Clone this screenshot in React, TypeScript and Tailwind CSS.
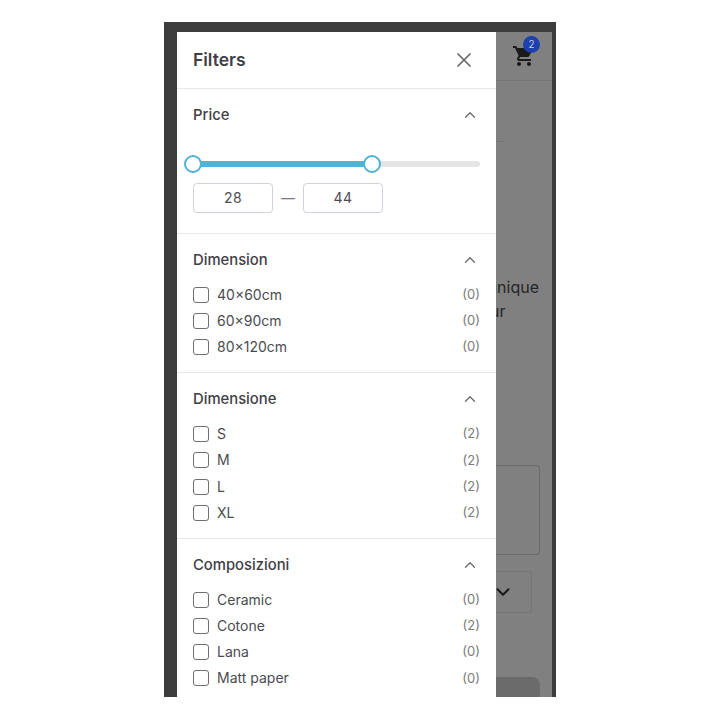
import { ChevronDown, ChevronUp, X } from 'lucide-react';

const SECTIONS = [
    {
        title: 'Dimension',
        items: [
            { label: '40×60cm', count: 0 },
            { label: '60×90cm', count: 0 },
            { label: '80×120cm', count: 0 },
        ],
    },
    {
        title: 'Dimensione',
        items: [
            { label: 'S', count: 2 },
            { label: 'M', count: 2 },
            { label: 'L', count: 2 },
            { label: 'XL', count: 2 },
        ],
    },
    {
        title: 'Composizioni',
        items: [
            { label: 'Ceramic', count: 0 },
            { label: 'Cotone', count: 2 },
            { label: 'Lana', count: 0 },
            { label: 'Matt paper', count: 0 },
        ],
    },
];

function CartIcon() {
    return (
        <svg width="24" height="24" viewBox="0 0 24 24" fill="#1a1a1a">
            <path d="M15.55 13c.75 0 1.41-.41 1.75-1.03l3.58-6.49A.996.996 0 0 0 20.01 4H5.21l-.94-2H1v2h2l3.6 7.59-1.35 2.44C4.52 15.37 5.48 17 7 17h12v-2H7l1.1-2h7.45zM7 18c-1.1 0-1.99.9-1.99 2S5.9 22 7 22s2-.9 2-2-.9-2-2-2zm10 0c-1.1 0-1.99.9-1.99 2s.89 2 1.99 2 2-.9 2-2-.9-2-2-2z" />
        </svg>
    );
}

function Section({ title, items }: { title: string; items: { label: string; count: number }[] }) {
    return (
        <section className="border-b border-[#e5e7eb] px-4 pt-[14px] pb-[12.15px]">
            <div className="flex h-6 items-center justify-between">
                <h3 className="text-[14.8px] font-medium text-[#3f4046]">{title}</h3>
                <ChevronUp size={18} strokeWidth={1.75} className="mr-[1px] text-[#6b6b6b]" />
            </div>
            <ul className="mt-[9.5px] flex flex-col">
                {items.map((item) => (
                    <li key={item.label} className="flex h-[26.25px] items-center">
                        <span className="h-4 w-4 rounded-[3px] border border-[#6f6f6f] bg-white" />
                        <span className="ml-2 text-sm text-[#4b4c52]">{item.label}</span>
                        <span className="ml-auto text-[13px] text-[#7b7b7b]">({item.count})</span>
                    </li>
                ))}
            </ul>
        </section>
    );
}

export default function App() {
    return (
        <div className="h-[720px] w-[720px] overflow-hidden bg-white pt-[22px] font-['Inter',sans-serif]">
            <div className="mx-auto flex h-[675px] w-[392px] bg-[#3c3c3c] pt-[10px] pr-1 pl-[13px]">
                <aside className="h-full w-[319px] shrink-0 overflow-hidden bg-white">
                    <header className="flex h-[57px] items-center justify-between border-b border-[#e5e7eb] px-4">
                        <h2 className="text-[17.5px] font-semibold text-[#3f4046]">Filters</h2>
                        <X size={24} strokeWidth={1.75} className="mr-[4.5px] text-[#6b6b6b]" />
                    </header>

                    <section className="border-b border-[#e5e7eb] px-4 pt-[14px] pb-5">
                        <div className="flex h-6 items-center justify-between">
                            <h3 className="text-[14.8px] font-medium text-[#3f4046]">Price</h3>
                            <ChevronUp size={18} strokeWidth={1.75} className="mr-[1px] text-[#6b6b6b]" />
                        </div>
                        <div className="relative mt-[34px] h-[6px] rounded-full bg-[#e5e5e5]">
                            <div className="h-full w-[179px] rounded-full bg-[#4fb3d4]" />
                            <span className="absolute top-[-6px] left-[-9px] h-[18px] w-[18px] rounded-full border-2 border-[#4fb3d4] bg-white" />
                            <span className="absolute top-[-6px] left-[170px] h-[18px] w-[18px] rounded-full border-2 border-[#4fb3d4] bg-white" />
                        </div>
                        <div className="mt-4 flex items-center">
                            <div className="flex h-[30px] w-20 items-center justify-center rounded border border-[#cfd4dc] text-sm tracking-wide text-[#4b4c52]">
                                28
                            </div>
                            <span className="w-[30px] text-center text-sm text-[#7b7b7b]">—</span>
                            <div className="flex h-[30px] w-20 items-center justify-center rounded border border-[#cfd4dc] text-sm tracking-wide text-[#4b4c52]">
                                44
                            </div>
                        </div>
                    </section>

                    {SECTIONS.map((section) => (
                        <Section key={section.title} title={section.title} items={section.items} />
                    ))}
                </aside>

                <div className="h-full w-14 overflow-hidden bg-[#808080]">
                    <div className="flex h-[49px] items-center justify-end border-b border-[#757575] pr-[16px]">
                        <div className="relative">
                            <CartIcon />
                            <span className="absolute top-[-8px] right-[-4px] flex h-[17px] w-[17px] items-center justify-center rounded-full bg-[#1e40af] text-[10px] text-[#c4cce0]">
                                2
                            </span>
                        </div>
                    </div>
                    <div className="mt-[60px] h-px w-2 bg-[#757575]" />
                    <p className="mt-[133px] ml-[-30px] w-[73px] text-base leading-6 text-[#262626]">
                        <span className="block text-right">unique</span>
                        <span className="block pl-[24px]">ur</span>
                    </p>
                    <div className="mt-[142px] mr-3 h-[90px] rounded-r border-y border-r border-[#6b6b6b]" />
                    <div className="mt-4 mr-5 flex h-[42px] items-center rounded-r border-y border-r border-[#757575]">
                        <ChevronDown size={22} strokeWidth={2.25} className="ml-[-4px] text-[#1a1a1a]" />
                    </div>
                    <div className="mt-[64px] mr-3 h-10 rounded-tr-lg bg-[#6b6b6b]" />
                </div>
            </div>
        </div>
    );
}
